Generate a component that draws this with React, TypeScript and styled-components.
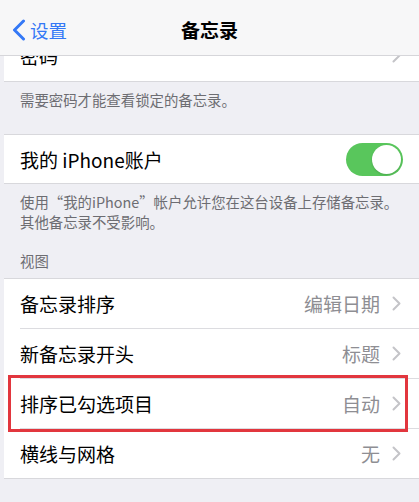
import styled, { createGlobalStyle } from "styled-components";

const GlobalStyle = createGlobalStyle`
  body {
    margin: 0;
    background: #efeff4;
    font-family: "Noto Sans CJK SC", "Noto Sans", sans-serif;
    -webkit-font-smoothing: antialiased;
  }
`;

const Screen = styled.div`
  width: 419px;
  height: 502px;
  overflow: hidden;
  background: #efeff4;
`;

const NavBar = styled.header`
  position: relative;
  z-index: 1;
  height: 55px;
  display: grid;
  grid-template-columns: 1fr auto 1fr;
  align-items: center;
  background: #f7f7f8;
  border-bottom: 1px solid #d6d6da;
`;

const BackButton = styled.div`
  display: flex;
  align-items: center;
  gap: 4px;
  padding-left: 12px;
  padding-top: 4px;
  color: #3478f6;
  font-size: 18.5px;
`;

const Title = styled.h1`
  margin: 0;
  padding-top: 4px;
  font-size: 19px;
  font-weight: 600;
  color: #000;
`;

const Group = styled.div<{ $noTop?: boolean }>`
  margin-left: 4px;
  background: #fff;
  border-top: ${(p) => (p.$noTop ? "none" : "1px solid #d8d8dc")};
  border-bottom: 1px solid #d8d8dc;
`;

// the first row sits half under the nav bar, only its lower part shows
const Clipped = styled.div`
  height: 25px;
  overflow: hidden;
  > * {
    margin-top: -25px;
  }
`;

const Row = styled.div<{ $last?: boolean; $h?: number }>`
  position: relative;
  height: ${(p) => p.$h || 49}px;
  display: flex;
  align-items: center;
  padding: 0 18px 0 16px;
  font-size: 19px;
  color: #000;
  border-bottom: ${(p) => (p.$last ? "none" : "1px solid transparent")};
  &::after {
    content: "";
    display: ${(p) => (p.$last ? "none" : "block")};
    position: absolute;
    left: 16px;
    right: 0;
    bottom: -1px;
    height: 1px;
    background: #dcdce0;
  }
`;

const Highlight = styled.div`
  position: relative;
  &::before {
    content: "";
    position: absolute;
    left: 4px;
    right: 11px;
    top: -4px;
    bottom: -3px;
    border: 3px solid #e2363e;
    pointer-events: none;
    z-index: 2;
  }
`;

const Label = styled.span`
  flex: 1;
`;

const Value = styled.span`
  color: #8e8e93;
  margin-right: 12px;
`;

const Footer = styled.div<{ $bottom: number }>`
  padding: 8px 16px ${(p) => p.$bottom}px 20px;
  font-size: 14.4px;
  line-height: 20px;
  color: #6d6d72;
`;

const SectionHeader = styled.div`
  padding: 0 20px 7px;
  font-size: 14.4px;
  line-height: 20px;
  color: #6d6d72;
`;

const Toggle = styled.div<{ $on: boolean }>`
  width: 57px;
  height: 33px;
  border-radius: 17px;
  background: ${(p) => (p.$on ? "#59c65c" : "#e5e5ea")};
  display: flex;
  align-items: center;
  justify-content: ${(p) => (p.$on ? "flex-end" : "flex-start")};
  padding: 2px;
  box-sizing: border-box;
  margin-right: -2px;
`;

const Knob = styled.div`
  width: 29px;
  height: 29px;
  border-radius: 50%;
  background: #fff;
  box-shadow: 0 1px 2px rgba(0, 0, 0, 0.15);
`;

function Chevron() {
  return (
    <svg width="9" height="15" viewBox="0 0 9 15">
      <path
        d="M1.5 1.5 L7.5 7.5 L1.5 13.5"
        fill="none"
        stroke="#c4c4c8"
        strokeWidth="2"
        strokeLinecap="round"
        strokeLinejoin="round"
      />
    </svg>
  );
}

function BackIcon() {
  return (
    <svg width="14" height="22" viewBox="0 0 14 22">
      <path
        d="M11.5 2 L2.5 11 L11.5 20"
        fill="none"
        stroke="#3478f6"
        strokeWidth="3"
        strokeLinecap="round"
        strokeLinejoin="round"
      />
    </svg>
  );
}

const viewRows = [
  { label: "备忘录排序", value: "编辑日期" },
  { label: "新备忘录开头", value: "标题" },
  { label: "排序已勾选项目", value: "自动", marked: true },
  { label: "横线与网格", value: "无" },
];

export default function App() {
  return (
    <Screen>
      <GlobalStyle />
      <NavBar>
        <BackButton>
          <BackIcon />
          设置
        </BackButton>
        <Title>备忘录</Title>
        <div />
      </NavBar>

      <Group $noTop>
        <Clipped>
          <Row $last>
            <Label>密码</Label>
            <Chevron />
          </Row>
        </Clipped>
      </Group>
      <Footer $bottom={24}>需要密码才能查看锁定的备忘录。</Footer>

      <Group>
        <Row $last $h={48}>
          <Label>我的 iPhone账户</Label>
          <Toggle $on>
            <Knob />
          </Toggle>
        </Row>
      </Group>
      <Footer $bottom={19}>
        使用“我的iPhone”帐户允许您在这台设备上存储备忘录。
        <br />
        其他备忘录不受影响。
      </Footer>

      <SectionHeader>视图</SectionHeader>
      <Group>
        {viewRows.map((r, i) => {
          const row = (
            <Row key={r.label} $last={i === viewRows.length - 1}>
              <Label>{r.label}</Label>
              <Value>{r.value}</Value>
              <Chevron />
            </Row>
          );
          return r.marked ? <Highlight key={r.label}>{row}</Highlight> : row;
        })}
      </Group>
    </Screen>
  );
}
